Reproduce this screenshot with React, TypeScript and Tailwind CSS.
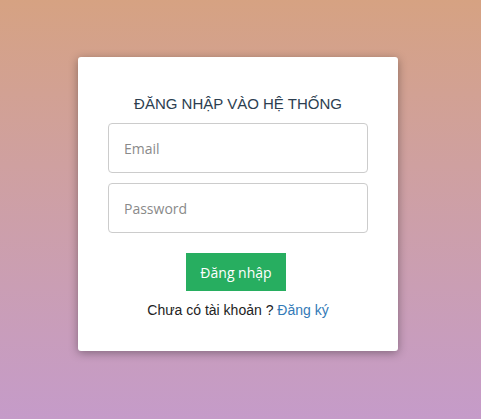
const App = () => {
  return (
    <div className="min-h-[419px] w-full bg-gradient-to-b from-[#d6a282] to-[#c59bc9] flex justify-center pt-[57px] pr-[5px]">
      <div className="w-[320px] h-[294px] bg-white rounded-[3px] shadow-[0_2px_10px_rgba(0,0,0,0.35)] px-[30px] pt-[36px]">
        <h2 className="text-center text-[15px] leading-[22px] text-[#2c3e50] font-['Liberation_Sans',sans-serif]">
          ĐĂNG NHẬP VÀO HỆ THỐNG
        </h2>
        <form className="mt-[8px] flex flex-col gap-[10px]">
          <input
            type="text"
            placeholder="Email"
            className="h-[50px] w-full border border-[#cccccc] rounded-[4px] px-[15px] text-[14px] font-['Open_Sans',sans-serif] placeholder:text-[#8a8a8a] outline-none"
          />
          <input
            type="password"
            placeholder="Password"
            className="h-[50px] w-full border border-[#cccccc] rounded-[4px] px-[15px] text-[14px] font-['Open_Sans',sans-serif] placeholder:text-[#8a8a8a] outline-none"
          />
        </form>
        <div className="mt-[20px] flex justify-center pr-[4px]">
          <button className="w-[100px] h-[38px] bg-[#27ae60] text-white text-[14px] font-['Open_Sans',sans-serif]">
            Đăng nhập
          </button>
        </div>
        <p className="mt-[10px] text-center text-[14px] leading-[18px] text-[#222] font-['Liberation_Sans',sans-serif]">
          Chưa có tài khoản ? <a href="#" className="text-[#337ab7]">Đăng ký</a>
        </p>
      </div>
    </div>
  );
};

export default App;
